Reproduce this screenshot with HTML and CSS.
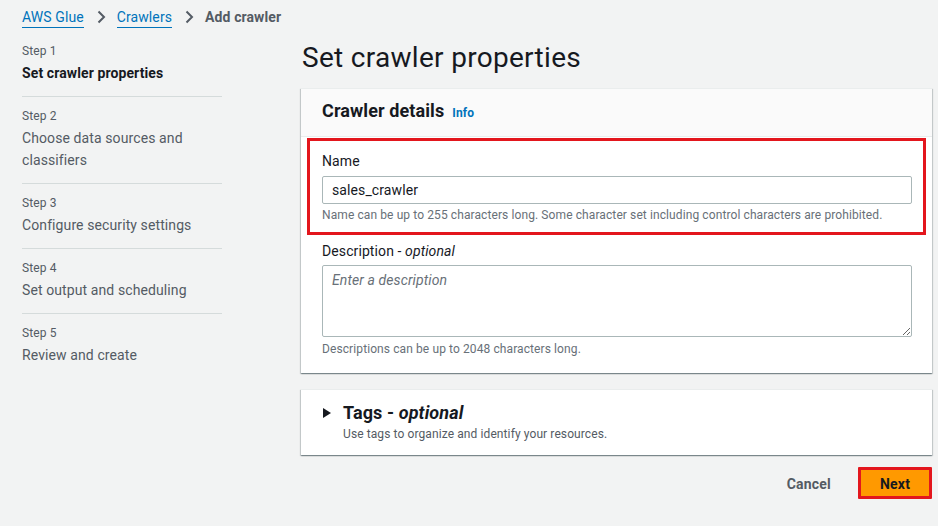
FILE: index.html
```html
<!DOCTYPE html>
<html lang="en">
<head>
    <meta charset="UTF-8">
    <meta name="viewport" content="width=device-width, initial-scale=1.0">
    <title>Add crawler - AWS Glue</title>
    <link rel="stylesheet" href="styles.css">
</head>
<body>
    <nav class="breadcrumbs">
        <a href="#" class="crumb-link">AWS Glue</a>
        <svg class="chevron" viewBox="0 0 16 16" aria-hidden="true"><path d="M5.5 2.5l5.5 5.5-5.5 5.5"/></svg>
        <a href="#" class="crumb-link">Crawlers</a>
        <svg class="chevron" viewBox="0 0 16 16" aria-hidden="true"><path d="M5.5 2.5l5.5 5.5-5.5 5.5"/></svg>
        <span class="crumb-current">Add crawler</span>
    </nav>

    <div class="layout">
        <ul class="steps">
            <li class="step active">
                <div class="step-label">Step 1</div>
                <div class="step-name">Set crawler properties</div>
            </li>
            <li class="step">
                <div class="step-label">Step 2</div>
                <div class="step-name">Choose data sources and classifiers</div>
            </li>
            <li class="step">
                <div class="step-label">Step 3</div>
                <div class="step-name">Configure security settings</div>
            </li>
            <li class="step">
                <div class="step-label">Step 4</div>
                <div class="step-name">Set output and scheduling</div>
            </li>
            <li class="step">
                <div class="step-label">Step 5</div>
                <div class="step-name">Review and create</div>
            </li>
        </ul>

        <main class="main">
            <h1>Set crawler properties</h1>

            <section class="card">
                <div class="card-header">
                    <h2>Crawler details</h2>
                    <a href="#" class="info">Info</a>
                </div>
                <div class="card-body">
                    <div class="highlight">
                        <label for="crawlerName">Name</label>
                        <input type="text" id="crawlerName" value="sales_crawler">
                        <p class="hint">Name can be up to 255 characters long. Some character set including control characters are prohibited.</p>
                    </div>
                    <div class="field">
                        <label for="crawlerDesc">Description - <i>optional</i></label>
                        <textarea id="crawlerDesc" placeholder="Enter a description"></textarea>
                        <p class="hint">Descriptions can be up to 2048 characters long.</p>
                    </div>
                </div>
            </section>

            <section class="card tags">
                <div class="tags-title">
                    <svg class="caret" viewBox="0 0 8 10" aria-hidden="true"><path d="M0 0l8 5-8 5z"/></svg>
                    <h2>Tags - <i>optional</i></h2>
                </div>
                <p class="tags-sub">Use tags to organize and identify your resources.</p>
            </section>

            <div class="actions">
                <button class="btn-link">Cancel</button>
                <button class="btn-primary">Next</button>
            </div>
        </main>
    </div>
</body>
</html>
```

FILE: styles.css
```css
:root {
    --background-color: #f2f3f3;
    --text-color: #16191f;
    --secondary-text: #545b64;
    --hint-text: #687078;
    --link-color: #0073bb;
    --border-color: #aab7b8;
    --divider-color: #d5dbdb;
    --accent-color: #ff9900;
    --annotation-color: #e3161d;
}

body {
    font-family: Roboto, 'Liberation Sans', sans-serif;
    font-size: 14px;
    line-height: 22px;
    letter-spacing: 0.1px;
    margin: 0;
    background-color: var(--background-color);
    color: var(--text-color);
}

.breadcrumbs {
    display: flex;
    align-items: center;
    height: 22px;
    padding: 6px 22px 0;
}

.crumb-link {
    color: var(--link-color);
    text-decoration: none;
    border-bottom: 1px solid var(--link-color);
    line-height: 19px;
    margin-top: 1px;
}

.chevron {
    width: 16px;
    height: 16px;
    margin: 0 8px 0 9px;
    fill: none;
    stroke: var(--secondary-text);
    stroke-width: 2;
}

.crumb-current {
    color: var(--secondary-text);
    font-weight: bold;
}

.layout {
    display: grid;
    grid-template-columns: 200px 1fr;
    column-gap: 79px;
    padding: 12px 6px 0 22px;
    align-items: start;
}

.steps {
    list-style: none;
    margin: 1px 0 0;
    padding: 0;
}

.step {
    padding: 9px 0 12px;
    border-bottom: 1px solid var(--divider-color);
}

.step:first-child {
    padding-top: 0;
}

.step:last-child {
    border-bottom: none;
}

.step-label {
    font-size: 12px;
    line-height: 20px;
    color: var(--secondary-text);
    margin-bottom: 1px;
}

.step-name {
    color: var(--secondary-text);
}

.step.active .step-name {
    color: var(--text-color);
    font-weight: bold;
}

h1 {
    font-size: 28px;
    font-weight: normal;
    line-height: 36px;
    letter-spacing: 0.3px;
    margin: 0 0 12px 1px;
}

.card {
    background-color: white;
    border-top: 1px solid #eaeded;
    box-shadow: 0 1px 1px 0 rgba(0, 28, 36, 0.3), 1px 1px 1px 0 rgba(0, 28, 36, 0.15), -1px 1px 1px 0 rgba(0, 28, 36, 0.15);
}

.card-header {
    display: flex;
    align-items: baseline;
    gap: 8px;
    padding: 10px 20px 12px 21px;
    background-color: #fafafa;
    border-bottom: 1px solid #eaeded;
}

h2 {
    font-size: 18px;
    font-weight: bold;
    line-height: 24px;
    margin: 0;
}

.info {
    color: var(--link-color);
    font-size: 12px;
    font-weight: bold;
    text-decoration: none;
}

.card-body {
    padding: 0 6px 16px;
}

.highlight {
    border: 3px solid var(--annotation-color);
    padding: 9px 11px 9px 12px;
    margin-top: 1px;
}

.field {
    padding: 5px 14px 0 15px;
}

label {
    display: block;
    margin-bottom: 4px;
}

.field label {
    margin-bottom: 3px;
}

input[type="text"],
textarea {
    display: block;
    box-sizing: border-box;
    width: 100%;
    border: 1px solid var(--border-color);
    border-radius: 2px;
    font-family: inherit;
    font-size: 14px;
    letter-spacing: 0.1px;
    color: var(--text-color);
    padding: 4px 9px;
}

input[type="text"] {
    height: 28px;
}

textarea {
    height: 72px;
    line-height: 20px;
    resize: vertical;
}

textarea::placeholder {
    color: var(--hint-text);
    font-style: italic;
}

.hint {
    font-size: 12px;
    line-height: 16px;
    color: var(--hint-text);
    margin: 3px 0 0;
}

.field .hint {
    margin-top: 4px;
}

.card.tags {
    margin-top: 16px;
    padding: 11px 20px 13px 22px;
}

.tags-title {
    display: flex;
    align-items: center;
    gap: 12px;
}

.caret {
    width: 8px;
    height: 10px;
    fill: var(--text-color);
}

.tags-sub {
    margin: 1px 0 0 20px;
    font-size: 12px;
    line-height: 16px;
    color: var(--secondary-text);
}

.actions {
    display: flex;
    justify-content: flex-end;
    align-items: center;
    gap: 27px;
    margin-top: 12px;
}

button {
    font-family: inherit;
    font-size: 14px;
    font-weight: bold;
    line-height: 20px;
    letter-spacing: 0.2px;
    cursor: pointer;
}

.btn-link {
    background: none;
    border: none;
    color: var(--secondary-text);
    padding: 6px 0 4px;
}

.btn-primary {
    background-color: var(--accent-color);
    color: var(--text-color);
    border: 3px solid var(--annotation-color);
    border-radius: 1px;
    padding: 4px 19px;
    width: 74px;
    height: 32px;
}
```
